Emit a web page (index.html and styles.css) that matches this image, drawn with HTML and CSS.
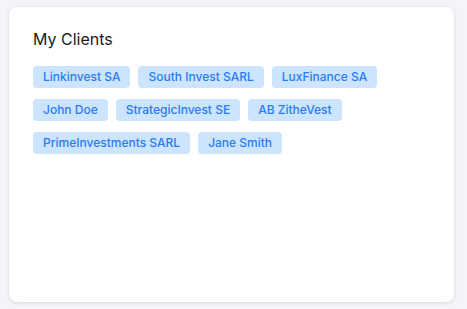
FILE: index.html
```html
<!DOCTYPE html>
<html lang="en">
<head>
  <meta charset="UTF-8">
  <meta name="viewport" content="width=device-width, initial-scale=1.0">
  <title>My Clients</title>
  <link rel="stylesheet" href="styles.css">
</head>
<body>
<div class="card">
  <h2>My Clients</h2>
  <div class="tag-list">
    <span class="tag">Linkinvest SA</span>
    <span class="tag">South Invest SARL</span>
    <span class="tag">LuxFinance SA</span>
    <span class="tag">John Doe</span>
    <span class="tag">StrategicInvest SE</span>
    <span class="tag">AB ZitheVest</span>
    <span class="tag">PrimeInvestments SARL</span>
    <span class="tag">Jane Smith</span>
  </div>
</div>
</body>
</html>
```

FILE: styles.css
```css
body {
  font-family: Inter, "Noto Sans", sans-serif;
  margin: 0;
  padding: 7px 13px 7px 9px;
  background-color: #f4f5f9;
}

.card {
  background-color: #ffffff;
  border-radius: 8px;
  box-shadow: 0px 1px 4px rgba(0, 0, 0, 0.12);
  height: 295px;
  box-sizing: border-box;
  padding: 20px 24px;
}

h2 {
  font-size: 16px;
  font-weight: 400;
  line-height: 24px;
  margin: 0 0 15px 0;
  color: #1a1a1a;
}

.tag-list {
  display: flex;
  flex-wrap: wrap;
  gap: 11px 8px;
}

.tag {
  background-color: #cce4fd;
  color: #2a7cf0;
  font-size: 12px;
  font-weight: 500;
  line-height: 22px;
  padding: 0 10px;
  border-radius: 4px;
}
```
